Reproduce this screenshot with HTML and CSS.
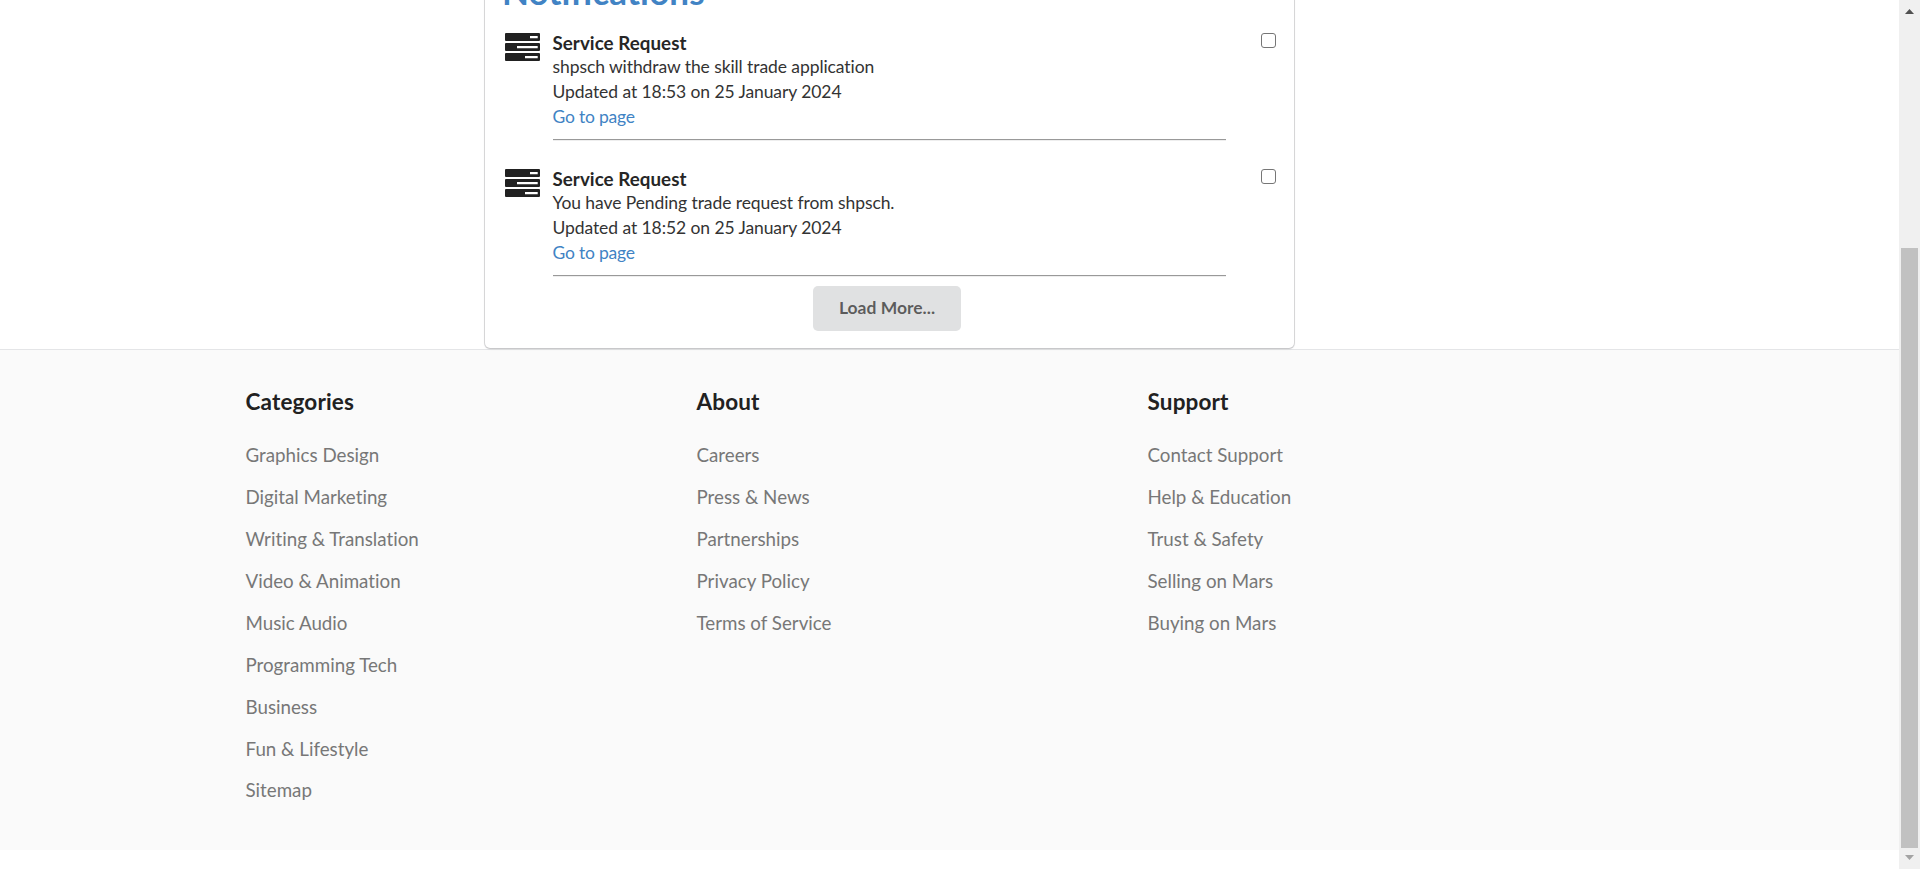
FILE: index.html
```html
<!DOCTYPE html>
<html lang="en">
<head>
<meta charset="utf-8">
<title>Notifications</title>
<link rel="stylesheet" href="styles.css">
</head>
<body>
<div class="window">
  <div class="page">
    <main class="card">
      <h1 class="card-title">Notifications</h1>
      <article class="notice">
        <svg class="notice-icon" viewBox="0 0 35 28"><path fill-rule="evenodd" d="M1 0H34Q35 0 35 1V7Q35 8 34 8H1Q0 8 0 7V1Q0 0 1 0ZM25 3V5.3H32.7V3ZM1 10H34Q35 10 35 11V17Q35 18 34 18H1Q0 18 0 17V11Q0 10 1 10ZM12 13V15.3H32.7V13ZM1 20H34Q35 20 35 21V27Q35 28 34 28H1Q0 28 0 27V21Q0 20 1 20ZM20 23V25.3H32.7V23Z"/></svg>
        <div class="notice-body">
          <h2 class="notice-title">Service Request</h2>
          <p class="notice-text">shpsch withdraw the skill trade application</p>
          <p class="notice-text">Updated at 18:53 on 25 January 2024</p>
          <a class="notice-link">Go to page</a>
          <div class="rule"></div>
        </div>
        <span class="check"></span>
      </article>
      <article class="notice">
        <svg class="notice-icon" viewBox="0 0 35 28"><path fill-rule="evenodd" d="M1 0H34Q35 0 35 1V7Q35 8 34 8H1Q0 8 0 7V1Q0 0 1 0ZM25 3V5.3H32.7V3ZM1 10H34Q35 10 35 11V17Q35 18 34 18H1Q0 18 0 17V11Q0 10 1 10ZM12 13V15.3H32.7V13ZM1 20H34Q35 20 35 21V27Q35 28 34 28H1Q0 28 0 27V21Q0 20 1 20ZM20 23V25.3H32.7V23Z"/></svg>
        <div class="notice-body">
          <h2 class="notice-title">Service Request</h2>
          <p class="notice-text">You have Pending trade request from shpsch.</p>
          <p class="notice-text">Updated at 18:52 on 25 January 2024</p>
          <a class="notice-link">Go to page</a>
          <div class="rule"></div>
        </div>
        <span class="check"></span>
      </article>
      <button class="load-more">Load More...</button>
    </main>
    <footer class="footer">
      <section class="column">
        <h3 class="column-title">Categories</h3>
        <a class="column-link">Graphics Design</a>
        <a class="column-link">Digital Marketing</a>
        <a class="column-link">Writing &amp; Translation</a>
        <a class="column-link">Video &amp; Animation</a>
        <a class="column-link">Music Audio</a>
        <a class="column-link">Programming Tech</a>
        <a class="column-link">Business</a>
        <a class="column-link">Fun &amp; Lifestyle</a>
        <a class="column-link">Sitemap</a>
      </section>
      <section class="column">
        <h3 class="column-title">About</h3>
        <a class="column-link">Careers</a>
        <a class="column-link">Press &amp; News</a>
        <a class="column-link">Partnerships</a>
        <a class="column-link">Privacy Policy</a>
        <a class="column-link">Terms of Service</a>
      </section>
      <section class="column">
        <h3 class="column-title">Support</h3>
        <a class="column-link">Contact Support</a>
        <a class="column-link">Help &amp; Education</a>
        <a class="column-link">Trust &amp; Safety</a>
        <a class="column-link">Selling on Mars</a>
        <a class="column-link">Buying on Mars</a>
      </section>
    </footer>
  </div>
  <div class="scrollbar">
    <svg class="arrow arrow-up" viewBox="0 0 9 5"><path d="M0 5L4.5 0L9 5Z"/></svg>
    <div class="thumb"></div>
    <svg class="arrow arrow-down" viewBox="0 0 9 5"><path d="M0 0H9L4.5 5Z"/></svg>
  </div>
</div>
</body>
</html>
```
FILE: styles.css
```css
* { box-sizing: border-box; }
body { margin: 0; background: #fff; overflow: hidden; }
h1, h2, h3, p { margin: 0; }
.window {
  display: flex;
  height: 869px;
  overflow: hidden;
  font-family: Lato, "Liberation Sans", sans-serif;
  font-size: 17.5px;
  font-variant-ligatures: none;
  color: #212121;
}
.page { width: 1899px; height: 869px; overflow: hidden; }
.card {
  display: flex;
  flex-direction: column;
  position: relative;
  z-index: 1;
  width: 809px;
  height: 392px;
  margin: -44px 0 0 485px;
  padding: 16px 17px 0;
  background: #fff;
  border-radius: 5px;
  box-shadow: 0 1px 2px 0 rgba(34, 36, 38, .15), 0 0 0 1px rgba(34, 36, 38, .15);
}
.card-title {
  height: 61px;
  font-size: 35px;
  line-height: 39px;
  font-weight: 700;
  letter-spacing: .13px;
  color: #4183c4;
}
.notice { display: flex; height: 136px; }
.notice-icon { width: 35px; height: 28px; margin-left: 3.4px; fill: #212121; }
.notice-body { width: 673px; margin: -3px 0 0 12.1px; }
.notice-title {
  height: 24px;
  font-size: 18.75px;
  line-height: 25px;
  font-weight: 700;
  letter-spacing: .05px;
  color: #262626;
}
.notice-text, .notice-link {
  display: block;
  font-size: 17.5px;
  line-height: 25px;
  letter-spacing: -.08px;
  color: #333;
}
.notice-link { letter-spacing: -.2px; color: #4183c4; }
.rule {
  height: 2px;
  margin: 10px -.5px 0 .5px;
  border-top: 1px solid #999;
  border-bottom: 1px solid #eee;
}
.check {
  width: 15px;
  height: 15px;
  margin-left: 35.5px;
  border: 1px solid #767676;
  border-radius: 3px;
}
.load-more {
  width: 148px;
  height: 45px;
  margin: -19px 0 0 311px;
  padding: 0 0 1px;
  border: 0;
  border-radius: 5px;
  background: #e0e1e2;
  color: rgba(0, 0, 0, .6);
  font: 700 17.5px/44px Lato, sans-serif;
}
.footer {
  display: flex;
  height: 501px;
  margin-top: 1px;
  padding: 37px 0 0 245.5px;
  background: #fafafa;
  border-top: 1px solid #e4e5e7;
}
.column { display: flex; flex-direction: column; width: 451px; }
.column-title {
  height: 54px;
  padding-top: 1px;
  font-size: 22.5px;
  line-height: 28px;
  font-weight: 700;
  letter-spacing: .15px;
}
.column-link { height: 42px; font-size: 18.75px; line-height: 28px; color: #777; }
.column-link:nth-child(10) { margin-top: -1px; }
.scrollbar {
  display: flex;
  flex-direction: column;
  width: 21px;
  height: 869px;
  padding-left: 2px;
  background: #f0f0f0;
}
.arrow { width: 9px; height: 5px; margin-left: 4px; }
.arrow-up { margin-top: 9px; fill: #505050; }
.thumb { width: 17px; height: 600px; margin-top: 234px; background: #c1c1c1; }
.arrow-down { margin-top: 7px; fill: #a3a3a3; }
```
